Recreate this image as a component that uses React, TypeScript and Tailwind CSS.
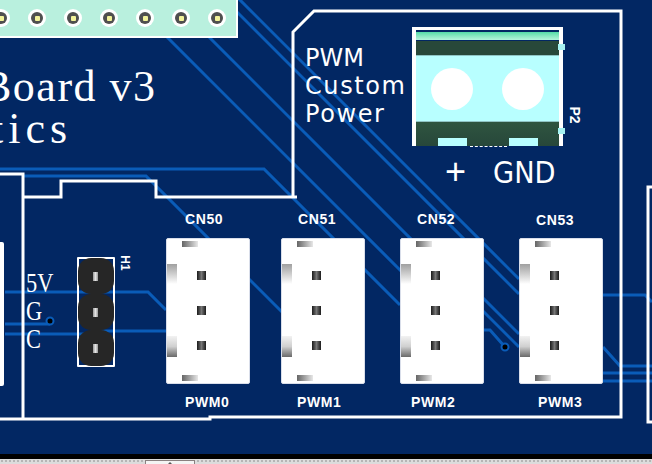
const connectors = [
  { id: 'CN50', left: 'left-[166px]' },
  { id: 'CN51', left: 'left-[281px]' },
  { id: 'CN52', left: 'left-[400px]' },
  { id: 'CN53', left: 'left-[519px]' },
];

const labels = [
  { text: 'CN50', pos: 'left-[185px] top-[211px]' },
  { text: 'CN51', pos: 'left-[298px] top-[211px]' },
  { text: 'CN52', pos: 'left-[417px] top-[211px]' },
  { text: 'CN53', pos: 'left-[536px] top-[212px]' },
  { text: 'PWM0', pos: 'left-[185px] top-[394px]' },
  { text: 'PWM1', pos: 'left-[297px] top-[394px]' },
  { text: 'PWM2', pos: 'left-[411px] top-[394px]' },
  { text: 'PWM3', pos: 'left-[538px] top-[394px]' },
];

const traces = [
  'M238 -2 L519 279',
  'M225 0 L519 294',
  'M208 36 L519 347',
  'M165 35 L410 280',
  'M0 169 H264 L400 305',
  'M23 176 H146 L285 315',
  'M483 298 L519 334',
  'M483 330 H490 L505 347',
  'M603 295 H645 L652 302',
  'M603 347 L620 366 H652',
  'M603 373 H652',
  'M603 381 H652',
  'M5 292 H148 L166 310',
  'M5 324 H50',
  'M5 334 H85 L95 331 H166',
];

const silk = [
  'M293 197 V32 L314 11 H621 V417 H210 V419 H0',
  'M0 174 H23 V419',
  'M23 197 H61 V181 H156 V197 H297',
  'M652 187 H648 V422 H652',
];

const holes = [0, 1, 2, 3, 4, 5, 6];

function Connector({ left }: { left: string }) {
  return (
    <div className={`absolute ${left} top-[238px] h-[146px] w-[84px] rounded-[2px] border border-[#d9deea] bg-white`}>
      <div className="absolute left-[15px] top-[2px] h-[6px] w-[16px] bg-linear-to-r from-[#666666] to-[#e8e8e8]" />
      <div className="absolute left-[15px] top-[136px] h-[6px] w-[16px] bg-linear-to-r from-[#666666] to-[#e8e8e8]" />
      <div className="absolute left-0 top-[25px] h-[20px] w-[10px] bg-linear-to-b from-[#a0a0a0] to-[#ffffff]" />
      <div className="absolute left-0 top-[97px] h-[21px] w-[10px] bg-linear-to-b from-[#f2f2f2] via-[#d0d0d0] to-[#6a6a6a]" />
      <div className="absolute left-[30px] top-[32px] flex flex-col gap-[26px]">
        <div className="h-[9px] w-[9px] bg-linear-to-r from-[#1c1c1c] via-[#777777] to-[#1c1c1c]" />
        <div className="h-[9px] w-[9px] bg-linear-to-r from-[#1c1c1c] via-[#777777] to-[#1c1c1c]" />
        <div className="h-[9px] w-[9px] bg-linear-to-r from-[#1c1c1c] via-[#777777] to-[#1c1c1c]" />
      </div>
    </div>
  );
}

function HeaderPin() {
  return (
    <div className="flex h-[36px] w-[36px] items-center justify-center rounded-[13px] bg-[#262626]">
      <div className="h-[9px] w-[5px] bg-linear-to-r from-[#999999] via-[#e4e4e4] to-[#999999]" />
    </div>
  );
}

export default function App() {
  return (
    <div className="flex h-[464px] w-[652px] flex-col overflow-hidden bg-[#022763] font-['Liberation_Sans',sans-serif] text-white">
      <div className="relative h-[454px] w-full shrink-0">
        {/* copper + silkscreen */}
        <svg className="absolute inset-0" width="652" height="454" viewBox="0 0 652 454" fill="none">
          {traces.map((d) => (
            <path key={d} d={d} stroke="#0a5cb8" strokeWidth="3" />
          ))}
          <circle cx="50" cy="321" r="3.5" fill="#000" stroke="#0a5cb8" strokeWidth="2" />
          <circle cx="505" cy="347" r="3.5" fill="#000" stroke="#0a5cb8" strokeWidth="2" />
          {silk.map((d) => (
            <path key={d} d={d} stroke="#fff" strokeWidth="3" />
          ))}
        </svg>

        {/* header strip top left */}
        <div className="absolute left-0 top-0 flex h-[38px] w-[238px] items-center border-b-2 border-r-2 border-white bg-[#b9f0de]">
          <div className="ml-[-8px] flex items-center gap-[18px]">
            {holes.map((n) => (
              <div key={n} className="flex h-[18px] w-[18px] items-center justify-center rounded-full bg-white">
                <div className="flex h-[12px] w-[12px] items-center justify-center rounded-full bg-[#4f4f4f]">
                  <div className="h-[5px] w-[5px] rounded-[1px] bg-[#f2f29a]" />
                </div>
              </div>
            ))}
          </div>
        </div>

        {/* board title */}
        <div className="absolute left-[-18px] top-[66px] whitespace-nowrap font-['Liberation_Serif',serif] text-[44px] font-normal leading-[42px] tracking-[1.5px]">
          Board v3
        </div>
        <div className="absolute left-[-9px] top-[108px] whitespace-nowrap font-['Liberation_Serif',serif] text-[44px] font-normal leading-[42px] tracking-[5px]">
          tics
        </div>

        {/* left edge part */}
        <div className="absolute left-0 top-[242px] h-[144px] w-[4px] rounded-r-[2px] bg-white" />

        <div className="absolute left-[305px] top-[44px] flex flex-col whitespace-nowrap font-['DejaVu_Sans',sans-serif] text-[24px] leading-[28px]">
          <span>PWM</span>
          <span className="tracking-[1.6px]">Custom</span>
          <span className="tracking-[1.6px]">Power</span>
        </div>

        {/* P2 terminal block */}
        <div className="absolute left-[412px] top-[27px] flex h-[119px] w-[151px] flex-col border-x-[4px] border-t-[3px] border-white pt-[2px]">
          <div className="h-[8px] shrink-0 bg-linear-to-b from-[#52dca8] to-[#b4f5dc]" />
          <div className="mt-px h-[14px] shrink-0 bg-[#28483a]" />
          <div className="relative flex h-[67px] shrink-0 items-center justify-center gap-[29px] border-y border-[#8fc4c4] bg-[#b8ffff]">
            <div className="h-[42px] w-[42px] rounded-full bg-white" />
            <div className="h-[42px] w-[42px] rounded-full bg-white" />
          </div>
          <div className="flex h-[24px] shrink-0 items-end justify-center gap-[42px] bg-linear-to-b from-[#2f5540] to-[#27473a]">
            <div className="h-[8px] w-[29px] bg-[#b8ffff]" />
            <div className="h-[8px] w-[29px] bg-[#b8ffff]" />
          </div>
        </div>
        <div className="absolute left-[558px] top-[44px] h-[6px] w-[7px] bg-[#a6f2f2]" />
        <div className="absolute left-[558px] top-[128px] h-[6px] w-[7px] bg-[#a6f2f2]" />
        <div className="absolute left-[470px] top-[146px] h-px w-[37px] border-t border-dashed border-white" />

        <div className="absolute left-[566px] top-[108px] rotate-90 text-[14px] font-bold leading-[14px]">P2</div>

        <div className="absolute left-[445px] top-[153px] text-[36px] font-normal leading-[38px]">+</div>
        <div className="absolute left-[493px] top-[154px] origin-left scale-x-[0.88] whitespace-nowrap font-['DejaVu_Sans',sans-serif] text-[31px] leading-[36px]">
          GND
        </div>

        {/* fan header */}
        <div className="absolute left-[77px] top-[257px] h-[110px] w-[38px] rounded-[1px] border-2 border-white" />
        <div className="absolute left-[77px] top-[257px] flex w-[37px] flex-col items-center pt-px">
          <HeaderPin />
          <HeaderPin />
          <HeaderPin />
        </div>
        <div className="absolute left-[117px] top-[256px] rotate-90 text-[12px] font-bold leading-[14px]">H1</div>

        <div className="absolute left-[26px] top-[269px] flex origin-left scale-x-[0.8] flex-col font-['Liberation_Serif',serif] text-[28px] leading-[28px]">
          <span>5V</span>
          <span>G</span>
          <span>C</span>
        </div>

        {connectors.map((c) => (
          <Connector key={c.id} left={c.left} />
        ))}
        {labels.map((l) => (
          <span key={l.text} className={`absolute ${l.pos} text-[14px] font-bold leading-[16px] tracking-[0.6px]`}>
            {l.text}
          </span>
        ))}
      </div>

      <div className="h-[5px] w-full shrink-0 bg-black" />
      <div className="flex flex-1 items-start bg-[#dcdcdc] bg-[radial-gradient(#b5b5b5_1px,transparent_1px)] bg-[length:4px_4px] pl-[145px] pt-px">
        <div className="flex h-[5px] w-[50px] justify-center border-x border-t border-[#8a8080] bg-[#f4f4f4]">
          <div className="mt-px h-0 w-0 border-x-[4px] border-b-[4px] border-x-transparent border-b-[#555555]" />
        </div>
      </div>
    </div>
  );
}
